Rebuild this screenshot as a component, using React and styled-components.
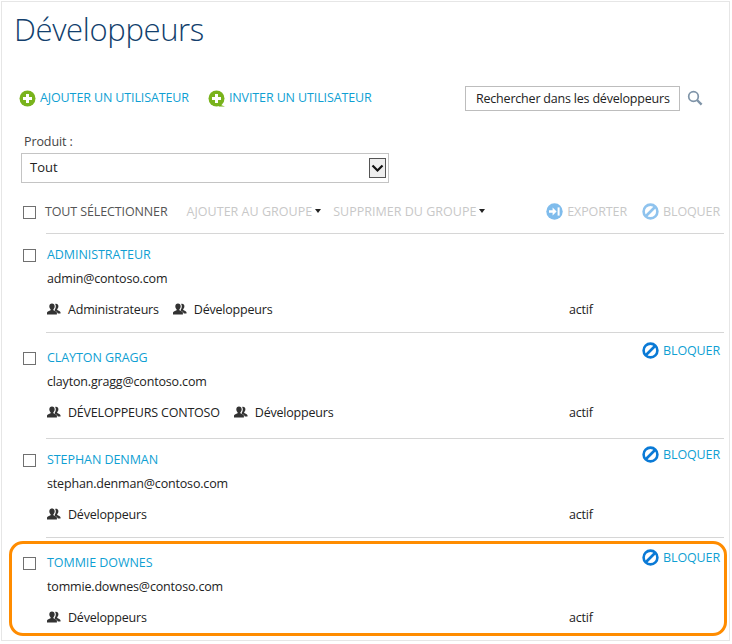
import React from "react";
import styled, { createGlobalStyle } from "styled-components";

const Global = createGlobalStyle`
  html, body { margin: 0; padding: 0; background: #fff; }
  body { font-family: "Open Sans", "Noto Sans", sans-serif; color: #222; }
  *, *::before, *::after { box-sizing: border-box; }
`;
const Page = styled.div`
  width: 729px; height: 640px; margin: 1px 0 0 1px;
  border: 1px solid #e6e6e6; padding-top: 7px; overflow: hidden;
`;
const Title = styled.h1`
  margin: 0 0 0 12px; font: 300 31px/40px "Open Sans", sans-serif; color: #123f6d; letter-spacing: -0.35px;
`;
const Toolbar = styled.div`
  display: flex; align-items: center; margin-top: 36px; padding-left: 17px; height: 26px;
`;
const Link = styled.a`
  display: inline-flex; align-items: center; gap: 4px; font-size: 12.5px; line-height: 16px; color: #0f9fd3; letter-spacing: -0.12px; white-space: nowrap;
  margin-right: ${p => p.$mr || 0}px;
`;
const Search = styled.div`
  display: flex; align-items: center; margin-left: auto; margin-right: 26px; gap: 7px;
`;
const SearchBox = styled.div`
  width: 215px; height: 25px; border: 1px solid #bdbdbd; font-size: 12.5px; line-height: 23px; padding-left: 10px; color: #222; letter-spacing: -0.2px; white-space: nowrap;
`;
const Label = styled.div`
  margin: 23px 0 0 22px; font-size: 12.5px; line-height: 16px; color: #444; letter-spacing: -0.1px;
`;
const Select = styled.div`
  display: flex; align-items: center; justify-content: space-between;
  width: 368px; height: 30px; margin: 3px 0 0 19px; border: 1px solid #c4c4c4; padding: 0 2px 2px 8px; font-size: 13px; color: #222;
`;
const SelectBtn = styled.div`
  width: 17px; height: 20px; margin-top: 2px; border: 1px solid #555; background: #eee; display: flex; align-items: center; justify-content: center;
`;
const Check = styled.span`
  flex: none; display: block; width: 13px; height: 13px; border: 1px solid #707070; background: #fff;
`;
const Actions = styled.div`
  display: flex; align-items: center; height: 20px; margin-top: 18px; padding: 0 9px 0 21px; font-size: 12.5px; color: #c8c8c8; letter-spacing: -0.12px;
  & > ${Check} { margin-top: 2px; }
`;
const SelectAll = styled.span`
  margin: 0 19px 0 9px; color: #555; white-space: nowrap;
`;
const Menu = styled.span`
  display: inline-flex; align-items: center; gap: 3px; margin-right: ${p => p.$mr || 0}px; white-space: nowrap; letter-spacing: 0.02px;
`;
const Caret = styled.i`
  width: 0; height: 0; border: 3.5px solid transparent; border-top: 4px solid #222; border-bottom: 0; display: block;
`;
const Spacer = styled.span`flex: 1;`;
const Action = styled.span`
  display: inline-flex; align-items: center; gap: 4px; margin-left: ${p => p.$ml || 0}px; white-space: nowrap;
`;
const List = styled.div`margin-top: 12px;`;
const RowWrap = styled.div`
  position: relative; display: flex; padding-left: 21px; padding-right: 5px;
  ${p => p.$hl && `
    &::after { content: ""; position: absolute; left: 7px; right: 2px; top: 4px; height: 95px; border: 3px solid #ff8c00; border-radius: 14px; pointer-events: none; }
  `}
`;
const CheckCol = styled.div`
  width: 23px; flex: none; padding-top: ${p => p.$top + 5}px;
`;
const RowBody = styled.div`
  position: relative; flex: 1; border-top: 1px solid #d6d6d6; height: ${p => p.$h}px; padding: ${p => p.$top + 1}px 0 0 1px;
`;
const Name = styled.div`
  font-size: 12.5px; line-height: 18px; color: #0f9fd3; letter-spacing: -0.07px;
`;
const Email = styled.div`
  margin-top: 6px; font-size: 12.5px; line-height: 18px; color: #222; letter-spacing: -0.17px;
`;
const Meta = styled.div`
  display: flex; align-items: center; height: 18px; margin-top: 12px; font-size: 12.5px; color: #222; letter-spacing: -0.2px;
`;
const Groups = styled.div`
  display: flex; align-items: center; gap: 14px; width: 522px;
`;
const Group = styled.span`
  display: inline-flex; align-items: center; gap: 7px; white-space: nowrap;
`;
const RowAction = styled.span`
  position: absolute; right: 4px; top: ${p => p.$top}px; display: inline-flex; align-items: center; gap: 4px; font-size: 12.5px; line-height: 16px; color: #0f9fd3; letter-spacing: -0.12px;
`;

const Plus = ({ tail }) => (
  <svg width="17" height="17" viewBox="0 0 17 17">
    {tail && <path d="M10 14 L17 16.500 L11 16.500 Z" fill="#6fae0a" />}
    <circle cx="8.500" cy="8.500" r="8" fill="#79b31c" />
    <path d="M7 4h3v3h3v3h-3v3H7v-3H4V7h3z" fill="#fff" />
  </svg>
);
const Loupe = () => (
  <svg width="16" height="16" viewBox="0 0 16 16" fill="none" stroke="#7f94a8">
    <circle cx="6.500" cy="6.500" r="4.800" strokeWidth="1.700" />
    <path d="M10 10l4.600 4.600" strokeWidth="2.400" />
  </svg>
);
const Chevron = () => (
  <svg width="13" height="9" viewBox="0 0 13 9" fill="none" stroke="#111" strokeWidth="2.200">
    <path d="M1.500 1.500l5 5 5-5" />
  </svg>
);
const Block = ({ color = "#0a7ad6" }) => (
  <svg width="17" height="17" viewBox="0 0 17 17" fill="none" stroke={color} strokeWidth="2.600">
    <circle cx="8.500" cy="8.500" r="6.900" />
    <path d="M4 13L13 4" />
  </svg>
);
const Export = () => (
  <svg width="17" height="17" viewBox="0 0 17 17">
    <circle cx="8.500" cy="8.500" r="8.200" fill="#7fbcec" />
    <path d="M3 7.200h3.600V4.600l4 3.900-4 3.900V9.800H3z" fill="#fff" />
    <rect x="11.600" y="4.400" width="2" height="8.200" fill="#fff" />
  </svg>
);
const People = () => (
  <svg width="14" height="12" viewBox="0 0 14 12" fill="#333">
    <path d="M5 .5c1.700 0 2.700 1.200 2.700 2.800 0 1.300-.6 2.300-1.300 2.900v1c1.500.5 3 1.200 3.500 2.300v2H0v-2C.5 8.400 2 7.700 3.600 7.200v-1C2.900 5.600 2.300 4.600 2.300 3.300 2.300 1.700 3.300.5 5 .5z" />
    <path d="M9 .7c1.500 0 2.400 1.100 2.400 2.600 0 1.200-.5 2.200-1.200 2.800v1c1.500.5 2.800 1.100 3.300 2.200v1.200h-2.700c-.5-1.400-1.800-2.300-3-2.800V6.600c.6-.8 1-2 1-3.300 0-1-.2-1.800-.7-2.400.3-.1.6-.2.900-.2z" />
  </svg>
);

const users = [
  { name: "ADMINISTRATEUR", email: "admin@contoso.com", groups: ["Administrateurs", "Développeurs"], h: 99, top: 11, actionTop: null },
  { name: "CLAYTON GRAGG", email: "clayton.gragg@contoso.com", groups: ["DÉVELOPPEURS CONTOSO", "Développeurs"], h: 106, top: 15, actionTop: 9 },
  { name: "STEPHAN DENMAN", email: "stephan.denman@contoso.com", groups: ["Développeurs"], h: 99, top: 11, actionTop: 7 },
  { name: "TOMMIE DOWNES", email: "tommie.downes@contoso.com", groups: ["Développeurs"], h: 102, top: 15, actionTop: 11, hl: true },
];

export default function App() {
  return (
    <Page>
      <Global />
      <Title>Développeurs</Title>
      <Toolbar>
        <Link $mr={19}><Plus />AJOUTER UN UTILISATEUR</Link>
        <Link><Plus tail />INVITER UN UTILISATEUR</Link>
        <Search>
          <SearchBox>Rechercher dans les développeurs</SearchBox>
          <Loupe />
        </Search>
      </Toolbar>
      <Label>Produit :</Label>
      <Select>Tout<SelectBtn><Chevron /></SelectBtn></Select>
      <Actions>
        <Check />
        <SelectAll>TOUT SÉLECTIONNER</SelectAll>
        <Menu $mr={12}>AJOUTER AU GROUPE<Caret /></Menu>
        <Menu>SUPPRIMER DU GROUPE<Caret /></Menu>
        <Spacer />
        <Action><Export />EXPORTER</Action>
        <Action $ml={15}><Block color="#8fc3ee" />BLOQUER</Action>
      </Actions>
      <List>
        {users.map(u => (
          <RowWrap key={u.name} $hl={u.hl}>
            <CheckCol $top={u.top}><Check /></CheckCol>
            <RowBody $h={u.h} $top={u.top}>
              <Name>{u.name}</Name>
              <Email>{u.email}</Email>
              <Meta>
                <Groups>
                  {u.groups.map(g => <Group key={g}><People />{g}</Group>)}
                </Groups>
                actif
              </Meta>
              {u.actionTop !== null && <RowAction $top={u.actionTop}><Block />BLOQUER</RowAction>}
            </RowBody>
          </RowWrap>
        ))}
      </List>
    </Page>
  );
}
